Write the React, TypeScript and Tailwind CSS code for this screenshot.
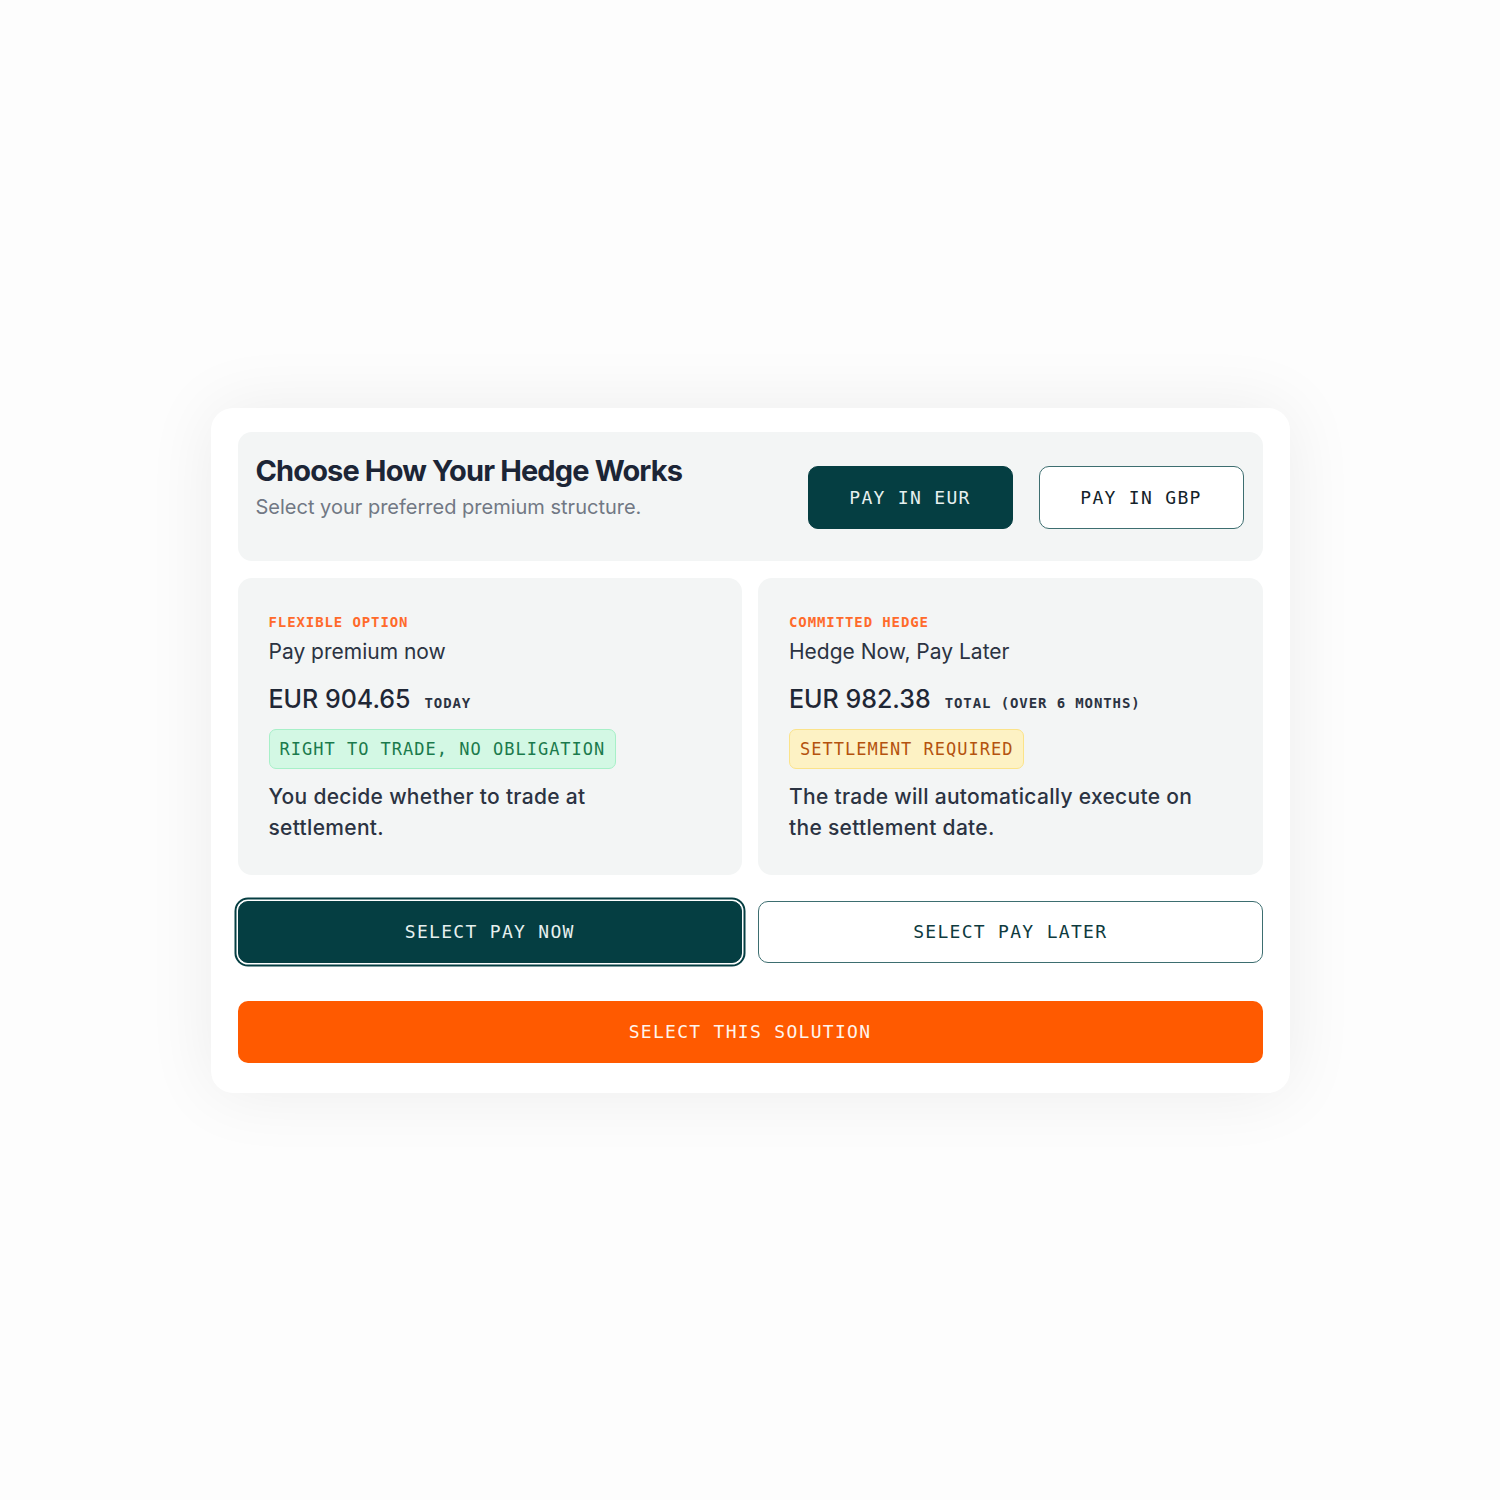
import { useState } from 'react'

const mono = "font-['DejaVu_Sans_Mono','Liberation_Mono',monospace]"
const sans = "font-['Inter','Noto_Sans',sans-serif]"

type Plan = 'now' | 'later'

interface OptionCardProps {
  kicker: string
  title: string
  price: string
  priceNote: string
  badge: string
  badgeClass: string
  description: string
}

function OptionCard({ kicker, title, price, priceNote, badge, badgeClass, description }: OptionCardProps) {
  return (
    <div className="rounded-[14px] bg-[#f3f5f5] px-[31px] pt-[35px] pb-[32px]">
      <div className={`${mono} text-[14px] font-bold leading-[18px] tracking-[0.9px] text-[#ff6a2b]`}>{kicker}</div>
      <div className="mt-[8px] text-[21px] leading-[26px] text-[#2b3342]">{title}</div>
      <div className="mt-[19px] flex items-baseline gap-[14px]">
        <span className="text-[25px] font-medium leading-[30px] text-[#1f2735]">{price}</span>
        <span className={`${mono} text-[14px] font-bold tracking-[0.9px] text-[#2b3342]`}>{priceNote}</span>
      </div>
      <div className="mt-[15px] flex">
        <span className={`${mono} rounded-[7px] border px-[10px] text-[17px] leading-[38px] tracking-[1px] ${badgeClass}`}>
          {badge}
        </span>
      </div>
      <p className="mt-[12px] max-w-[420px] text-[21px] font-medium leading-[31px] tracking-[0.3px] text-[#2b3342]">
        {description}
      </p>
    </div>
  )
}

export default function App() {
  const [currency, setCurrency] = useState<'EUR' | 'GBP'>('EUR')
  const [plan, setPlan] = useState<Plan>('now')

  const toggle = (active: boolean) =>
    active
      ? 'bg-[#053e42] text-[#e6f0ef] border-[#053e42]'
      : 'bg-white text-[#13232a] border-[#3d6e70]'

  const planBtn = (active: boolean) =>
    active
      ? 'border-[#053e42] bg-[#053e42] text-[#e6f0ef] ring-2 ring-[#053e42] ring-offset-[1.5px] ring-offset-white'
      : 'border-[#3d6e70] bg-white text-[#0e3a3e]'

  return (
    <div className={`${sans} flex min-h-screen items-center justify-center bg-[#fdfdfd]`}>
      <div className="w-[1079px] rounded-[22px] bg-white px-[27px] pt-6 pb-[30px] shadow-[0_0_70px_rgba(0,0,0,0.07)]">
        <div className="flex h-[129px] items-center justify-between rounded-[14px] bg-[#f3f5f5] pl-[18px] pr-[19px]">
          <div className="self-start pt-[20px]">
            <h1 className="text-[29px] font-bold leading-[38px] tracking-[-0.03em] text-[#1c2536]">
              Choose How Your Hedge Works
            </h1>
            <p className="mt-[2px] text-[20px] leading-[30px] text-[#717884]">Select your preferred premium structure.</p>
          </div>
          <div className="flex gap-[26px] pt-[2px]">
            {(['EUR', 'GBP'] as const).map((c) => (
              <button
                key={c}
                onClick={() => setCurrency(c)}
                className={`${mono} h-[63px] w-[205px] rounded-[10px] border-[1.5px] text-[18px] tracking-[1.3px] ${toggle(currency === c)}`}
              >
                PAY IN {c}
              </button>
            ))}
          </div>
        </div>

        <div className="mt-[17px] grid grid-cols-2 gap-4">
          <OptionCard
            kicker="FLEXIBLE OPTION"
            title="Pay premium now"
            price="EUR 904.65"
            priceNote="TODAY"
            badge="RIGHT TO TRADE, NO OBLIGATION"
            badgeClass="border-[#a7f0c8] bg-[#d3f8e4] text-[#1b7a4c]"
            description="You decide whether to trade at settlement."
          />
          <OptionCard
            kicker="COMMITTED HEDGE"
            title="Hedge Now, Pay Later"
            price="EUR 982.38"
            priceNote="TOTAL (OVER 6 MONTHS)"
            badge="SETTLEMENT REQUIRED"
            badgeClass="border-[#fbe38a] bg-[#fdf2c4] text-[#b4530e]"
            description="The trade will automatically execute on the settlement date."
          />
        </div>

        <div className="mt-[26px] grid grid-cols-2 gap-4">
          <button
            onClick={() => setPlan('now')}
            className={`${mono} h-[62px] rounded-[10px] border-[1.5px] text-[18px] tracking-[1.3px] ${planBtn(plan === 'now')}`}
          >
            SELECT PAY NOW
          </button>
          <button
            onClick={() => setPlan('later')}
            className={`${mono} h-[62px] rounded-[10px] border-[1.5px] text-[18px] tracking-[1.3px] ${planBtn(plan === 'later')}`}
          >
            SELECT PAY LATER
          </button>
        </div>

        <button
          className={`${mono} mt-[38px] h-[62px] w-full rounded-[10px] bg-[#ff5a00] text-[18px] tracking-[1.3px] text-[#fff4ec]`}
        >
          SELECT THIS SOLUTION
        </button>
      </div>
    </div>
  )
}
